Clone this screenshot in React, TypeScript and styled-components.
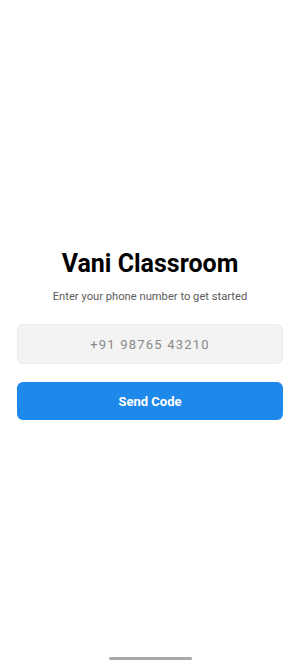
import styled, { createGlobalStyle } from "styled-components";

const GlobalStyle = createGlobalStyle`
  * { box-sizing: border-box; }
  html, body { margin: 0; padding: 0; background: #ffffff; }
  body { font-family: Roboto, "Liberation Sans", sans-serif; }
`;

const App = () => {
  return (
    <Screen>
      <GlobalStyle />
      <Content>
        <Title>Vani Classroom</Title>
        <Subtitle>Enter your phone number to get started</Subtitle>
        <PhoneInput type="tel" placeholder="+91 98765 43210" />
        <SendButton>Send Code</SendButton>
      </Content>
      <HomeBar />
    </Screen>
  );
};

export default App;

const Screen = styled.div`
  height: 667px;
  display: flex;
  flex-direction: column;
  align-items: center;
  justify-content: flex-end;
  background: #ffffff;
`;

const Content = styled.main`
  flex: 1;
  width: 100%;
  display: flex;
  flex-direction: column;
  align-items: center;
  justify-content: center;
  padding: 12px 17px 0;
`;

const Title = styled.h1`
  margin: 0;
  font-size: 25px;
  font-weight: 700;
  color: #000000;
  line-height: 30px;
`;

const Subtitle = styled.p`
  margin: 11px 0 0;
  font-size: 11.2px;
  color: #5c5c5c;
  line-height: 14px;
`;

const PhoneInput = styled.input`
  margin-top: 20px;
  width: 100%;
  height: 40px;
  border: 1px solid #ececec;
  border-radius: 6px;
  background: #f3f3f3;
  text-align: center;
  font-family: Roboto, "Liberation Sans", sans-serif;
  font-size: 13px;
  letter-spacing: 1.2px;
  color: #333;
  outline: none;

  &::placeholder {
    color: #8a8a8a;
  }
`;

const SendButton = styled.button`
  margin-top: 18px;
  width: 100%;
  height: 38px;
  border: none;
  border-radius: 6px;
  background: #1e88eb;
  color: #ffffff;
  font-family: Roboto, "Liberation Sans", sans-serif;
  font-size: 13px;
  font-weight: 700;
  cursor: pointer;
`;

const HomeBar = styled.div`
  width: 83px;
  height: 3px;
  border-radius: 2px;
  background: #a8a8a8;
  margin-bottom: 7px;
`;
